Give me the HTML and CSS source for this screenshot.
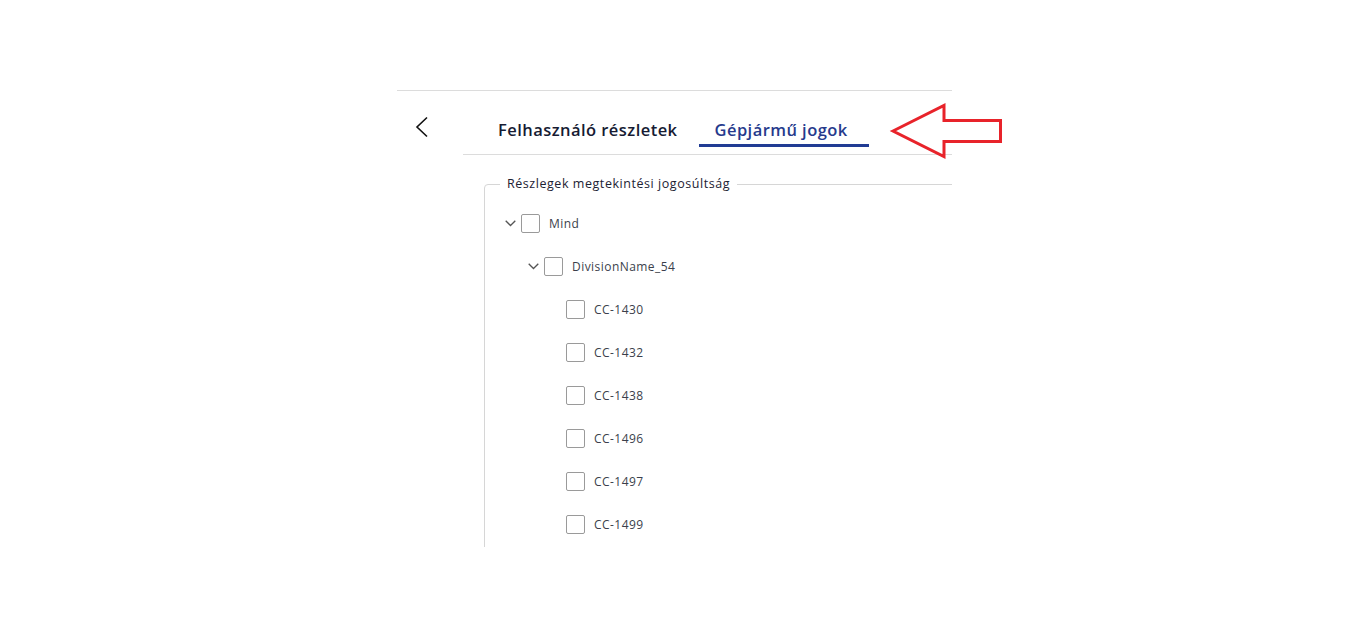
FILE: index.html
```html
<!DOCTYPE html>
<html lang="hu">
<head>
<meta charset="utf-8">
<title>Gépjármű jogok</title>
<link rel="stylesheet" href="styles.css">
</head>
<body>
<div class="panel">
  <div class="header">
    <button class="back" aria-label="Vissza">
      <svg width="14" height="22" viewBox="0 0 14 22"><path d="M12 1.5 L2 11 L12 20.5" fill="none" stroke="#111" stroke-width="1.6"/></svg>
    </button>
    <div class="tabs">
      <div class="tab">Felhasználó részletek</div>
      <div class="tab active">Gépjármű jogok</div>
    </div>
  </div>
  <div class="content">
    <fieldset class="group">
      <legend>Részlegek megtekintési jogosúltság</legend>
      <div class="row l0"><span class="toggle"><svg width="11" height="7" viewBox="0 0 11 7"><path d="M0.7 0.7 L5.5 5.5 L10.3 0.7" fill="none" stroke="#555" stroke-width="1.3"/></svg></span><span class="box"></span><span class="label">Mind</span></div>
      <div class="row l1"><span class="toggle"><svg width="11" height="7" viewBox="0 0 11 7"><path d="M0.7 0.7 L5.5 5.5 L10.3 0.7" fill="none" stroke="#555" stroke-width="1.3"/></svg></span><span class="box"></span><span class="label">DivisionName_54</span></div>
      <div class="row l2"><span class="toggle"></span><span class="box"></span><span class="label">CC-1430</span></div>
      <div class="row l2"><span class="toggle"></span><span class="box"></span><span class="label">CC-1432</span></div>
      <div class="row l2"><span class="toggle"></span><span class="box"></span><span class="label">CC-1438</span></div>
      <div class="row l2"><span class="toggle"></span><span class="box"></span><span class="label">CC-1496</span></div>
      <div class="row l2"><span class="toggle"></span><span class="box"></span><span class="label">CC-1497</span></div>
      <div class="row l2"><span class="toggle"></span><span class="box"></span><span class="label">CC-1499</span></div>
    </fieldset>
  </div>
</div>
<svg class="arrow" width="118" height="60" viewBox="0 0 118 60">
  <polygon points="5,29 56,3.5 56,18.5 112.5,18.5 112.5,39.5 56,39.5 56,54.5" fill="none" stroke="#e8232a" stroke-width="3" stroke-linejoin="miter"/>
</svg>
</body>
</html>
```
FILE: styles.css
```css
html, body {
  margin: 0;
  padding: 0;
  background: #fff;
}
body {
  font-family: "Open Sans", "Liberation Sans", sans-serif;
  color: #1b2030;
  position: relative;
  height: 629px;
  overflow: hidden;
}
.panel {
  margin: 90px 0 0 397px;
  width: 555px;
  border-top: 1px solid #dcdcdc;
}
.header {
  display: flex;
  height: 64px;
}
.back {
  width: 66px;
  border: 0;
  background: none;
  padding: 0 0 0 18px;
  display: flex;
  align-items: flex-start;
  padding-top: 25px;
  cursor: pointer;
}
.tabs {
  flex: 1;
  display: flex;
  border-bottom: 1px solid #dcdcdc;
  padding-left: 19px;
  gap: 5px;
}
.tab {
  font-size: 16.5px;
  font-weight: 600;
  letter-spacing: 0.45px;
  color: #161b33;
  padding: 0 16px;
  height: 56px;
  box-sizing: border-box;
  padding-top: 28px;
  border-bottom: 3px solid transparent;
  line-height: 22px;
}
.tab.active {
  color: #263a8c;
  border-bottom-color: #213c94;
  padding-right: 21px;
}
.content {
  height: 392px;
  overflow: hidden;
  padding-left: 87px;
  padding-top: 21px;
  box-sizing: border-box;
}
.group {
  margin: 0;
  width: 600px;
  border: 1px solid #d6d6d6;
  border-radius: 4px;
  padding: 10px 0 0 0;
  min-height: 600px;
}
.group legend {
  font-size: 12.5px;
  font-weight: 500;
  letter-spacing: 0.55px;
  color: #1d2233;
  padding: 0 7px;
  margin-left: 15px;
  line-height: 16px;
}
.row {
  display: flex;
  align-items: center;
  height: 43px;
}
.row.l0 { padding-left: 20px; }
.row.l1 { padding-left: 43px; }
.row.l2 { padding-left: 65px; }
.toggle {
  width: 16px;
  height: 19px;
  display: flex;
  align-items: center;
  justify-content: flex-start;
}
.box {
  width: 19px;
  height: 19px;
  box-sizing: border-box;
  border: 1px solid #9a9a9a;
  border-radius: 2px;
  margin-right: 9px;
}
.label {
  font-size: 12px;
  letter-spacing: 0.45px;
  color: #3b3f4c;
}
.arrow {
  position: absolute;
  left: 888px;
  top: 102px;
}
```
